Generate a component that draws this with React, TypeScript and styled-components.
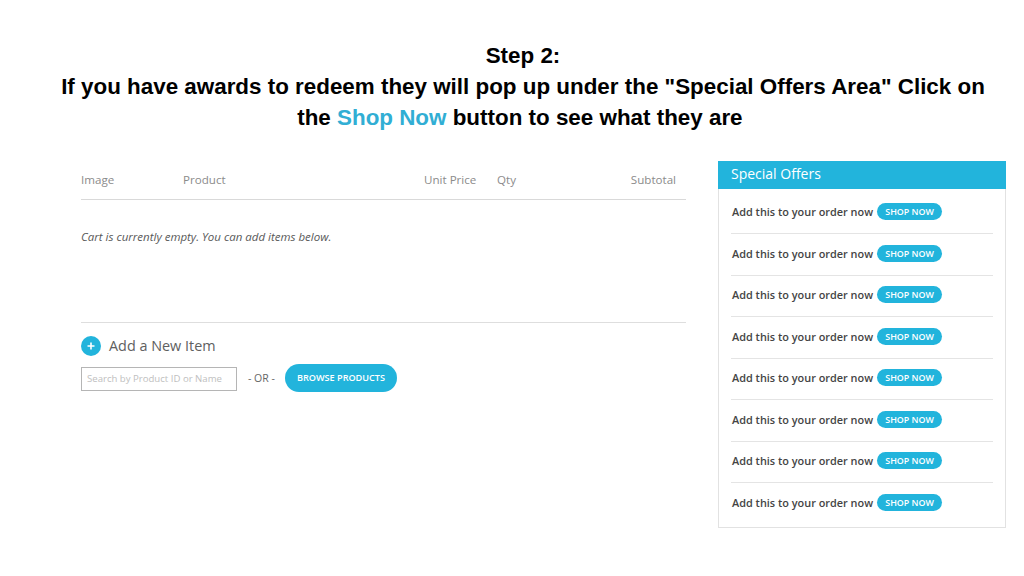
import React from "react";
import styled, { createGlobalStyle } from "styled-components";

const Global = createGlobalStyle`
  html, body { margin: 0; padding: 0; background: #fff; }
  body { font-family: "Open Sans", sans-serif; }
`;

const Page = styled.div`
  width: 1024px;
  height: 576px;
  overflow: hidden;
  padding-top: 40px;
  box-sizing: border-box;
`;

const Title = styled.h1`
  margin: 0 0 28px;
  padding-left: 22px;
  font: bold 22.4px/31px "Liberation Sans", Arial, sans-serif;
  color: #000;
  text-align: center;
`;

const Accent = styled.span`
  color: #31aed4;
`;

const Content = styled.div`
  display: flex;
  gap: 32px;
  padding-left: 81px;
  align-items: flex-start;
`;

const Cart = styled.section`
  width: 605px;
`;

const HeadRow = styled.div`
  display: grid;
  grid-template-columns: 102px 241px 73px 1fr auto;
  height: 36px;
  align-items: center;
  padding-right: 10px;
  padding-bottom: 2px;
  border-bottom: 1px solid #d9d9d9;
  font-size: 11.6px;
  color: #8b8b8b;
`;

const EmptyNote = styled.p`
  margin: 0;
  height: 123px;
  padding-top: 29px;
  box-sizing: border-box;
  border-bottom: 1px solid #dedede;
  font-size: 11.5px;
  line-height: 16px;
  font-style: italic;
  color: #595959;
`;

const AddHead = styled.div`
  display: flex;
  align-items: center;
  gap: 8px;
  margin-top: 13px;
  font-size: 14.4px;
  line-height: 20px;
  color: #606060;
`;

const PlusIcon = styled.svg`
  width: 20px;
  height: 20px;
  flex: none;
`;

const SearchRow = styled.div`
  display: flex;
  align-items: center;
  margin-top: 8px;
`;

const SearchBox = styled.div`
  width: 156px;
  height: 24px;
  margin-top: 1px;
  box-sizing: border-box;
  border: 1px solid #b5b5b5;
  padding-left: 5px;
  font-size: 9.6px;
  line-height: 22px;
  color: #c0c0c0;
  white-space: nowrap;
`;

const OrLabel = styled.span`
  width: 48px;
  padding-left: 11px;
  box-sizing: border-box;
  font-size: 10.5px;
  color: #666;
  white-space: nowrap;
`;

const BrowseButton = styled.div`
  width: 112px;
  height: 28px;
  border-radius: 14px;
  background: #22b4dc;
  color: #fff;
  font-size: 9.1px;
  font-weight: 600;
  line-height: 28px;
  text-align: center;
  white-space: nowrap;
`;

const Offers = styled.aside`
  width: 288px;
  height: 367px;
  box-sizing: border-box;
  border: 1px solid #e2e2e2;
  border-top: none;
`;

const OffersHead = styled.div`
  height: 28px;
  margin: 0 -1px;
  padding-left: 13px;
  background: #22b4dc;
  color: #fff;
  font-size: 14px;
  line-height: 26px;
`;

const OfferList = styled.div`
  padding: 3.5px 12px 0;
`;

const OfferRow = styled.div`
  display: flex;
  align-items: center;
  gap: 4px;
  height: 41.5px;
  padding: 0 0 2px 1px;
  box-sizing: border-box;
  border-bottom: 1px solid #e4e4e4;
  font-size: 10.9px;
  font-weight: 600;
  color: #444;
  white-space: nowrap;
  &:last-child { border-bottom: none; }
`;

const ShopButton = styled.span`
  width: 65px;
  height: 17px;
  border-radius: 9px;
  background: #22b4dc;
  color: #fff;
  font-size: 8.9px;
  font-weight: 600;
  line-height: 17px;
  text-align: center;
`;

export default function App() {
  return (
    <Page>
      <Global />
      <Title>
        Step 2:
        <br />
        If you have awards to redeem they will pop up under the "Special Offers Area" Click on
        <br />
        the <Accent>Shop Now</Accent> button to see what they are&nbsp;
      </Title>
      <Content>
        <Cart>
          <HeadRow>
            <span>Image</span>
            <span>Product</span>
            <span>Unit Price</span>
            <span>Qty</span>
            <span>Subtotal</span>
          </HeadRow>
          <EmptyNote>Cart is currently empty. You can add items below.</EmptyNote>
          <AddHead>
            <PlusIcon viewBox="0 0 20 20">
              <circle cx="10" cy="10" r="10" fill="#22b4dc" />
              <path d="M10 6.5v7M6.5 10h7" stroke="#fff" strokeWidth="1.6" />
            </PlusIcon>
            Add a New Item
          </AddHead>
          <SearchRow>
            <SearchBox>Search by Product ID or Name</SearchBox>
            <OrLabel>- OR -</OrLabel>
            <BrowseButton>BROWSE PRODUCTS</BrowseButton>
          </SearchRow>
        </Cart>
        <Offers>
          <OffersHead>Special Offers</OffersHead>
          <OfferList>
            {Array.from({ length: 8 }, (_, i) => (
              <OfferRow key={i}>
                Add this to your order now
                <ShopButton>SHOP NOW</ShopButton>
              </OfferRow>
            ))}
          </OfferList>
        </Offers>
      </Content>
    </Page>
  );
}
